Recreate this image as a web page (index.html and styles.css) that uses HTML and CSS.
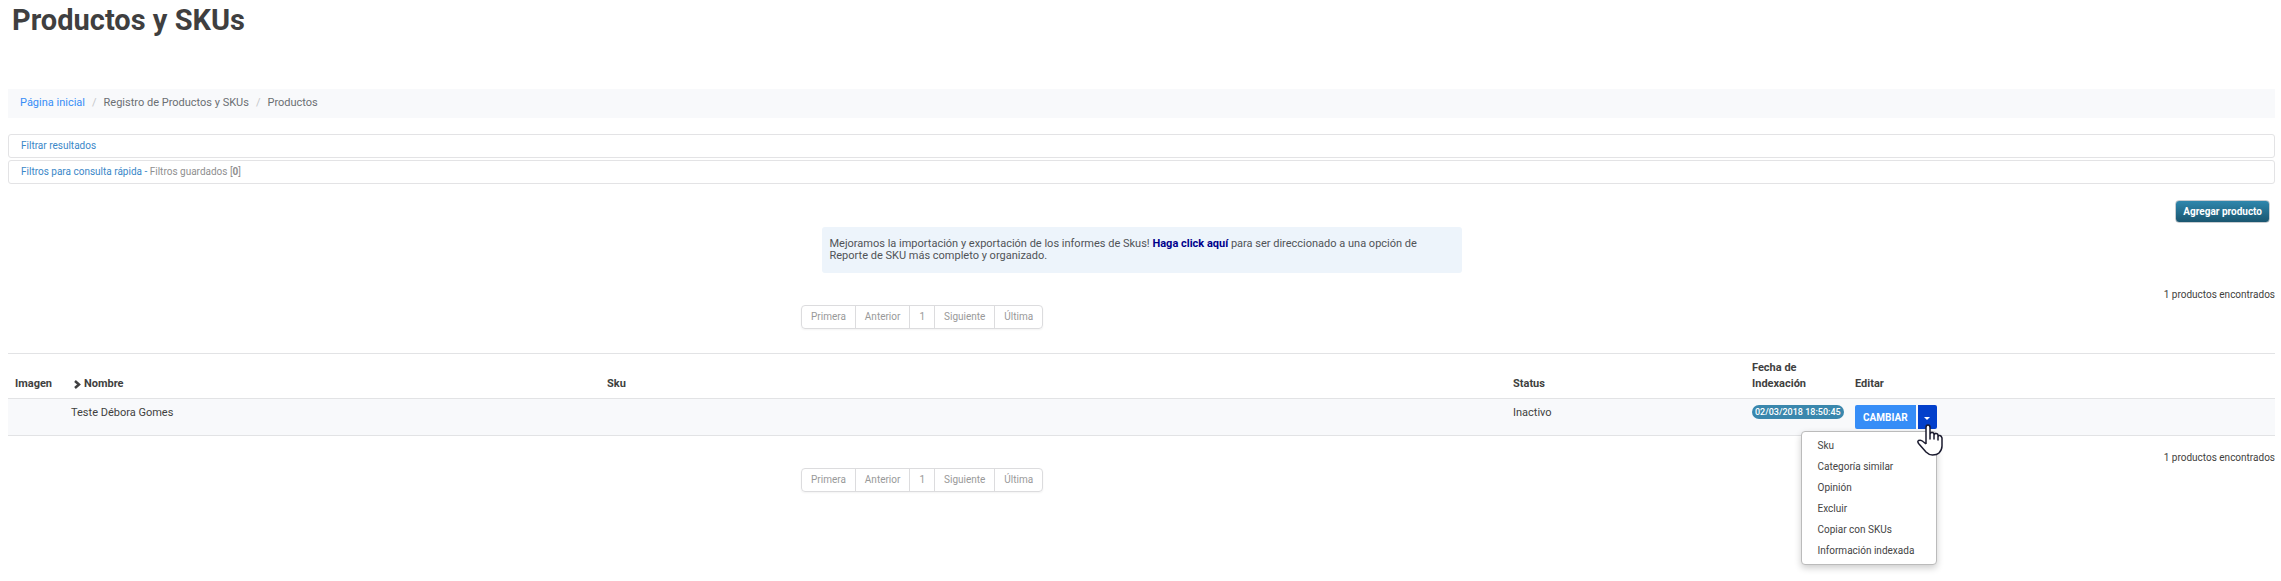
FILE: index.html
```
<!DOCTYPE html>
<html lang="es">
<head>
<meta charset="utf-8">
<title>Productos y SKUs</title>
<link rel="stylesheet" href="styles.css">
</head>
<body>
<h1 class="page-title">Productos y SKUs</h1>
<main class="content">
  <nav class="breadcrumb" aria-label="Ruta">
    <a href="#inicio">Página inicial</a>
    <span class="sep">/</span>
    <span>Registro de Productos y SKUs</span>
    <span class="sep">/</span>
    <span>Productos</span>
  </nav>
  <section class="filters">
    <div class="filter"><a href="#filtrar">Filtrar resultados</a></div>
    <div class="filter"><a href="#filtros">Filtros para consulta rápida - </a><span>Filtros guardados [<b>0</b>]</span></div>
  </section>
  <div class="toolbar"><button type="button" class="add">Agregar producto</button></div>
  <p class="notice">Mejoramos la importación y exportación de los informes de Skus! <a href="#informes">Haga click aquí</a> para ser direccionado a una opción de Reporte de SKU más completo y organizado.</p>
  <p class="count">1 productos encontrados</p>
  <nav class="pager" aria-label="Paginación superior">
    <a href="#p">Primera</a><a href="#p">Anterior</a><a href="#p">1</a><a href="#p">Siguiente</a><a href="#p">Última</a>
  </nav>
  <table class="products">
    <colgroup><col class="c-image"><col class="c-name"><col class="c-sku"><col class="c-status"><col class="c-date"><col></colgroup>
    <thead>
      <tr>
        <th scope="col">Imagen</th>
        <th scope="col" class="sorted"><svg width="7" height="9" viewBox="0 0 7 9" aria-hidden="true"><path d="M1 1 5 4.500 1 8" fill="none" stroke="currentColor" stroke-width="2.500"/></svg>Nombre</th>
        <th scope="col">Sku</th>
        <th scope="col">Status</th>
        <th scope="col">Fecha de Indexación</th>
        <th scope="col">Editar</th>
      </tr>
    </thead>
    <tbody>
      <tr>
        <td></td>
        <td>Teste Débora Gomes</td>
        <td></td>
        <td>Inactivo</td>
        <td><span class="badge">02/03/2018 18:50:45</span></td>
        <td>
          <div class="split">
            <button type="button" class="change">CAMBIAR</button>
            <button type="button" class="toggle" aria-label="Más acciones" aria-expanded="true"><span class="caret"></span></button>
            <ul class="menu">
              <li><a href="#sku">Sku</a></li>
              <li><a href="#categoria">Categoría similar</a></li>
              <li><a href="#opinion">Opinión</a></li>
              <li><a href="#excluir">Excluir</a></li>
              <li><a href="#copiar">Copiar con SKUs</a></li>
              <li><a href="#info">Información indexada</a></li>
            </ul>
            <svg class="pointer" width="26" height="33" viewBox="0 0 26 33" aria-hidden="true"><path d="M9 20V3.500Q9 1 11 1T13 3.500V15V10.500Q13 8.500 15 8.500T17 10.500V15V11.500Q17 9.500 19 9.500T21 11.500V16V13Q21.500 11 23 11.500T25 14V22Q25 26 22 29Q20 31 15.500 31Q12 31 9 28L2 20Q0 17.500 1.500 16.500Q4 15.500 6 17.500L9 20" fill="#fff" stroke="#1b1b2f" stroke-width="1.500" stroke-linejoin="round"/></svg>
          </div>
        </td>
      </tr>
    </tbody>
  </table>
  <p class="count">1 productos encontrados</p>
  <nav class="pager" aria-label="Paginación inferior">
    <a href="#p">Primera</a><a href="#p">Anterior</a><a href="#p">1</a><a href="#p">Siguiente</a><a href="#p">Última</a>
  </nav>
</main>
</body>
</html>
```
FILE: styles.css
```
* { box-sizing: border-box; }
body { margin: 0; min-height: 100vh; background: #fff; color: #3f3f40; font: 11px/16px Roboto, "Liberation Sans", sans-serif; }
a { text-decoration: none; }
button { font-family: inherit; border: 0; cursor: pointer; }
.page-title { margin: 0; padding: 4px 12px 0; font-size: 29px; line-height: 32px; font-weight: 700; }
.content { padding: 53px 6px 0 8px; }
.breadcrumb { display: flex; gap: 7px; height: 29px; padding: 0 12px 2px; align-items: center; background: #f8f9fb; color: #6b6f73; }
.breadcrumb a { color: #368df7; }
.breadcrumb .sep { color: #c4c7ca; }
.filters { display: grid; gap: 2px; margin-top: 16px; }
.filter { height: 24px; padding: 0 12px; border: 1px solid #e3e3e5; border-radius: 3px; font-size: 10px; line-height: 22px; color: #8f8f8f; white-space: pre; }
.filter a { color: #3a87c8; }
.toolbar { display: flex; justify-content: flex-end; padding: 16px 5px 0 0; }
.add { height: 23px; padding: 0 7px; border: 1px solid #c8ccd0; border-radius: 4px; background: linear-gradient(#2f87ad, #1a5670); color: #fff; font-size: 10px; font-weight: 700; }
.notice { width: 640px; margin: 4px auto 0; padding: 11px 8px; min-height: 46px; border-radius: 3px; background: #edf4fb; color: #505357; line-height: 12px; }
.notice a { color: #00008b; font-weight: 700; }
.count { margin: 14px 0 0; text-align: right; font-size: 10px; line-height: 16px; }
.pager { display: flex; width: max-content; margin: 2px 0 24px 793px; border: 1px solid #dcdcde; border-radius: 4px; box-shadow: 0 1px 2px #0000000d; font-size: 10px; line-height: 22px; }
.pager a { padding: 0 9px; color: #999; }
.pager a + a { border-left: 1px solid #dcdcde; }
.products { width: 100%; table-layout: fixed; border-collapse: collapse; }
.c-image { width: 56px; } .c-name { width: 536px; } .c-sku { width: 906px; } .c-status { width: 239px; } .c-date { width: 103px; }
.products th { height: 45px; padding: 6px 7px; border: solid #e2e3e5; border-width: 1px 0; text-align: left; vertical-align: bottom; }
.products th.sorted svg { margin: 0 3px -2px 3px; }
.products td { height: 37px; padding: 6px 7px; border-bottom: 1px solid #e2e3e5; background: #f8f9fb; vertical-align: top; }
.badge { display: block; width: max-content; padding: 0 3px; border-radius: 7px; background: #3a87ad; color: #fff; font-size: 9px; font-weight: 500; line-height: 14px; }
.split { display: flex; gap: 2px; width: max-content; position: relative; }
.change { height: 24px; padding: 0 8px; border-radius: 2px 0 0 2px; background: #368df7; color: #fff; font-size: 10px; font-weight: 700; }
.toggle { width: 19px; height: 24px; padding: 0; border-radius: 0 2px 2px 0; background: #0340cb; }
.caret { display: block; width: 6px; margin: 2px auto 0; border: 3px solid transparent; border-top-color: #fff; border-bottom: 0; }
.menu { position: absolute; right: 0; top: 26px; width: 136px; margin: 0; padding: 3px 0; list-style: none; background: #fff; border: 1px solid #bbb; border-radius: 4px; box-shadow: 0 3px 7px #0003; font-size: 10px; line-height: 21px; }
.menu a { display: block; padding: 0 16px; color: #444; }
.pointer { position: absolute; right: -6px; top: 19px; }
```
